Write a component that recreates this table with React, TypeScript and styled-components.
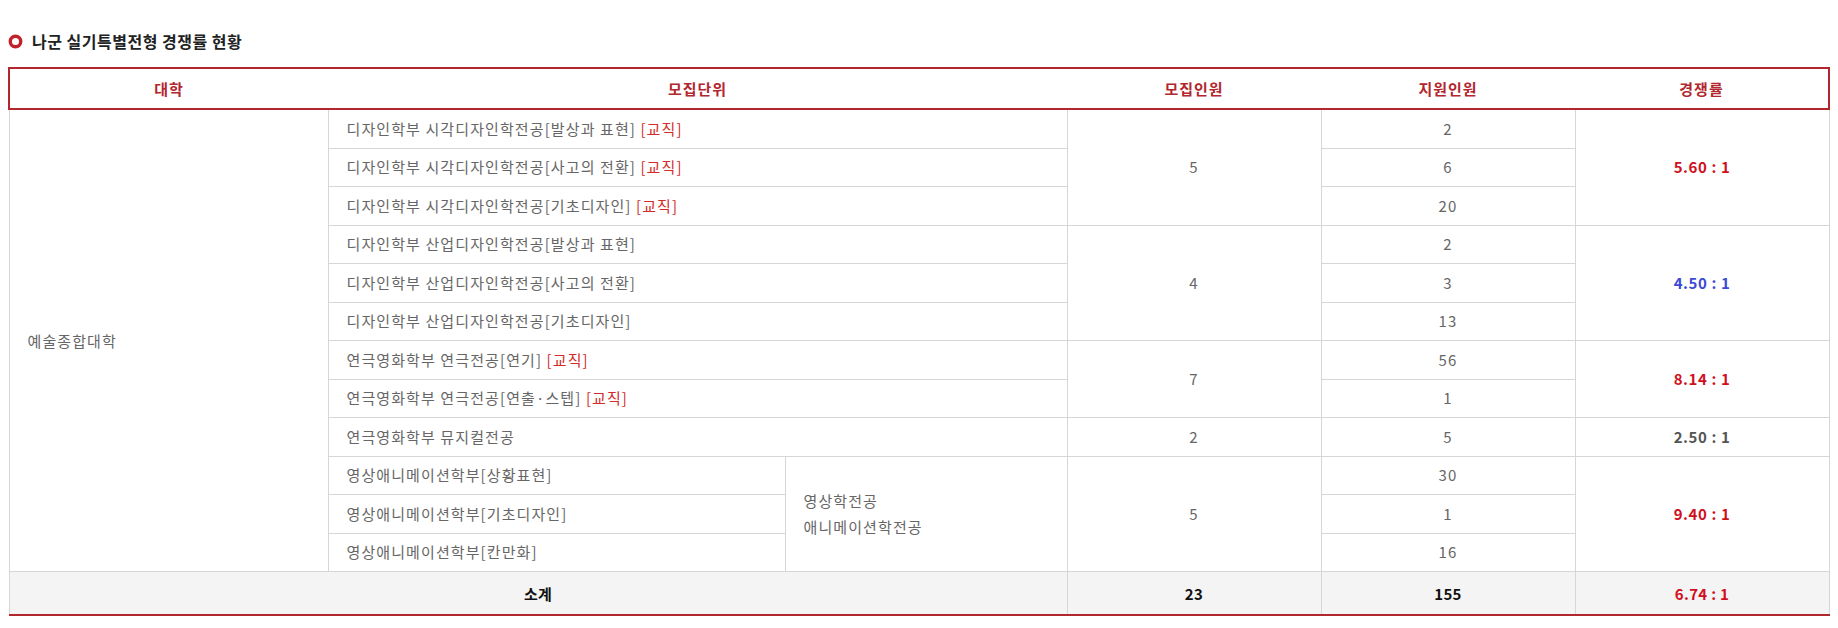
import React from "react";
import styled, { createGlobalStyle } from "styled-components";

const GlobalStyle = createGlobalStyle`
  body {
    margin: 8px;
    background: #fff;
    font-family: "Noto Sans CJK KR", "Noto Sans", sans-serif;
  }
`;

const RED = "#b2262e";
const LINE = "#d6d6d6";

type Unit = { name: string; edu?: boolean };
type Group = {
  units: Unit[];
  sub?: string[];
  recruit: number;
  applicants: number[];
  ratio: string;
  tone: "red" | "blue" | "gray";
};

const groups: Group[] = [
  {
    units: [
      { name: "디자인학부 시각디자인학전공[발상과 표현]", edu: true },
      { name: "디자인학부 시각디자인학전공[사고의 전환]", edu: true },
      { name: "디자인학부 시각디자인학전공[기초디자인]", edu: true },
    ],
    recruit: 5,
    applicants: [2, 6, 20],
    ratio: "5.60 : 1",
    tone: "red",
  },
  {
    units: [
      { name: "디자인학부 산업디자인학전공[발상과 표현]" },
      { name: "디자인학부 산업디자인학전공[사고의 전환]" },
      { name: "디자인학부 산업디자인학전공[기초디자인]" },
    ],
    recruit: 4,
    applicants: [2, 3, 13],
    ratio: "4.50 : 1",
    tone: "blue",
  },
  {
    units: [
      { name: "연극영화학부 연극전공[연기]", edu: true },
      { name: "연극영화학부 연극전공[연출·스텝]", edu: true },
    ],
    recruit: 7,
    applicants: [56, 1],
    ratio: "8.14 : 1",
    tone: "red",
  },
  {
    units: [{ name: "연극영화학부 뮤지컬전공" }],
    recruit: 2,
    applicants: [5],
    ratio: "2.50 : 1",
    tone: "gray",
  },
  {
    units: [
      { name: "영상애니메이션학부[상황표현]" },
      { name: "영상애니메이션학부[기초디자인]" },
      { name: "영상애니메이션학부[칸만화]" },
    ],
    sub: ["영상학전공", "애니메이션학전공"],
    recruit: 5,
    applicants: [30, 1, 16],
    ratio: "9.40 : 1",
    tone: "red",
  },
];

const Section = styled.section`
  padding-top: 23px;
`;

const Title = styled.h3`
  display: flex;
  align-items: center;
  gap: 9px;
  margin: 0 0 16px;
  font-size: 16px;
  font-weight: 700;
  letter-spacing: 0.5px;
  color: #222;
  line-height: 20px;
`;

const Table = styled.table`
  width: 100%;
  border-collapse: collapse;
  table-layout: fixed;
  font-size: 15px;
  letter-spacing: 1.1px;
  color: #666;
`;

const HeadCell = styled.th`
  height: 39px;
  padding: 0;
  border-top: 2px solid ${RED};
  border-bottom: 2px solid ${RED};
  font-weight: 700;
  font-size: 15px;
  letter-spacing: 1px;
  color: ${RED};
  text-align: center;
  &:first-child {
    border-left: 2px solid ${RED};
  }
  &:last-child {
    border-right: 2px solid ${RED};
  }
`;

const Cell = styled.td<{ $center?: boolean }>`
  height: 37.5px;
  padding: 0 18px;
  border: 1px solid ${LINE};
  text-align: ${(p) => (p.$center ? "center" : "left")};
  line-height: 26px;
  white-space: nowrap;
`;

const Edu = styled.span`
  color: #d42a2a;
`;

const toneColor = { red: "#d0101c", blue: "#3b4ad6", gray: "#555" };

const Ratio = styled.strong<{ $tone: "red" | "blue" | "gray" }>`
  font-weight: 700;
  letter-spacing: 0.6px;
  color: ${(p) => toneColor[p.$tone]};
`;

const TotalRow = styled.tr`
  background: #f4f4f4;
`;

const TotalCell = styled.td<{ $red?: boolean }>`
  height: 42px;
  padding: 0;
  border: 1px solid ${LINE};
  border-bottom: 2px solid ${RED};
  text-align: center;
  font-weight: 700;
  letter-spacing: 0.3px;
  color: ${(p) => (p.$red ? "#d0101c" : "#111")};
`;

const Bullet = () => (
  <svg width="15" height="15" viewBox="0 0 16 16">
    <circle cx="8" cy="8" r="5.6" fill="#fff" stroke="#c2202b" strokeWidth="3.6" />
  </svg>
);

export default function App() {
  const totalRows = groups.reduce((n, g) => n + g.units.length, 0);
  return (
    <Section>
      <GlobalStyle />
      <Title>
        <Bullet />
        나군 실기특별전형 경쟁률 현황
      </Title>
      <Table>
        <colgroup>
          <col style={{ width: 319 }} />
          <col style={{ width: 457 }} />
          <col style={{ width: 282 }} />
          <col style={{ width: 254 }} />
          <col style={{ width: 254 }} />
          <col />
        </colgroup>
        <thead>
          <tr>
            <HeadCell>대학</HeadCell>
            <HeadCell colSpan={2}>모집단위</HeadCell>
            <HeadCell>모집인원</HeadCell>
            <HeadCell>지원인원</HeadCell>
            <HeadCell>경쟁률</HeadCell>
          </tr>
        </thead>
        <tbody>
          {groups.map((g, gi) =>
            g.units.map((u, ui) => (
              <tr key={`${gi}-${ui}`}>
                {gi === 0 && ui === 0 && <Cell rowSpan={totalRows}>예술종합대학</Cell>}
                <Cell colSpan={g.sub ? 1 : 2}>
                  {u.name}
                  {u.edu && <Edu> [교직]</Edu>}
                </Cell>
                {g.sub && ui === 0 && (
                  <Cell rowSpan={g.units.length}>
                    {g.sub.map((s) => (
                      <div key={s}>{s}</div>
                    ))}
                  </Cell>
                )}
                {ui === 0 && (
                  <Cell $center rowSpan={g.units.length}>
                    {g.recruit}
                  </Cell>
                )}
                <Cell $center>{g.applicants[ui]}</Cell>
                {ui === 0 && (
                  <Cell $center rowSpan={g.units.length}>
                    <Ratio $tone={g.tone}>{g.ratio}</Ratio>
                  </Cell>
                )}
              </tr>
            ))
          )}
          <TotalRow>
            <TotalCell colSpan={3}>소계</TotalCell>
            <TotalCell>23</TotalCell>
            <TotalCell>155</TotalCell>
            <TotalCell $red>6.74 : 1</TotalCell>
          </TotalRow>
        </tbody>
      </Table>
    </Section>
  );
}
